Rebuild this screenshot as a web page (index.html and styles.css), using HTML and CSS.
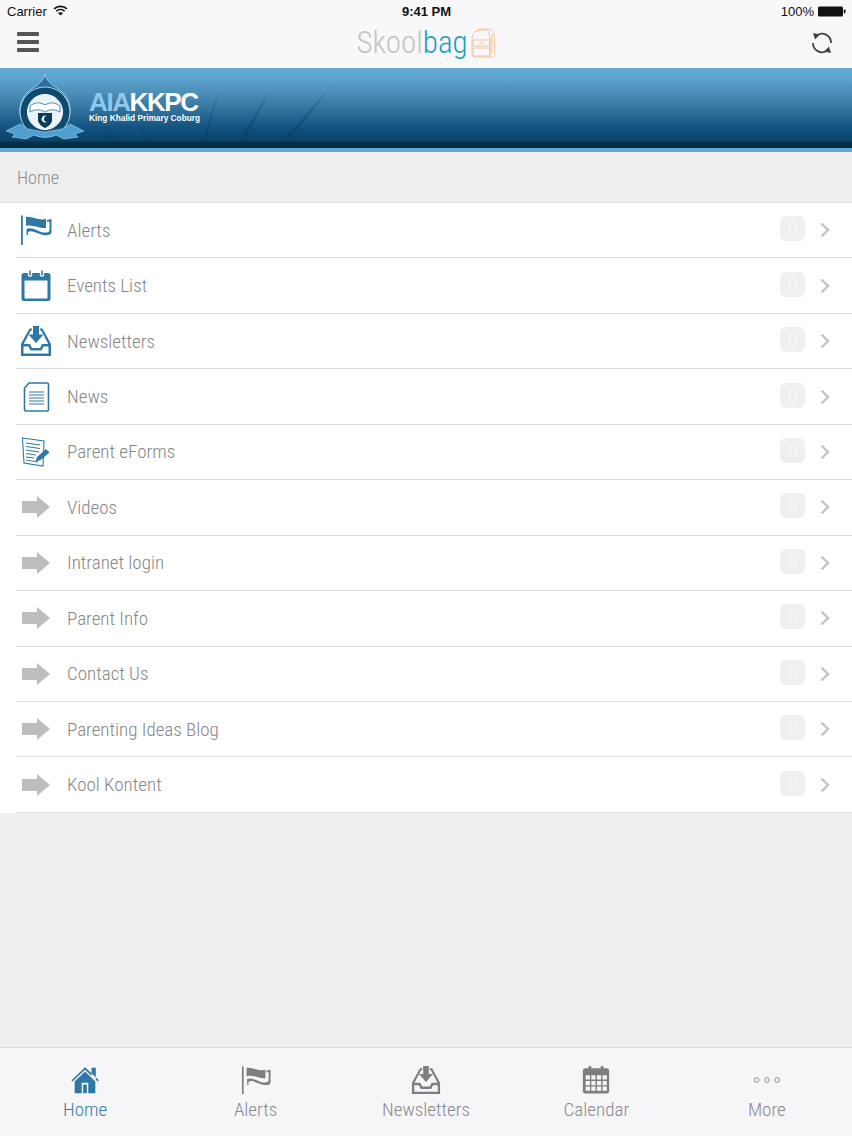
FILE: index.html
```html
<!DOCTYPE html>
<html lang="en">
<head>
<meta charset="utf-8">
<title>Skoolbag</title>
<link rel="stylesheet" href="styles.css">
</head>
<body>
<div class="app">
  <header class="top">
    <div class="status">
      <div class="status-left"><span>Carrier</span>
        <svg class="wifi" viewBox="0 0 16 12"><path d="M1 4.200C4.800.6 11.200.6 15 4.200" fill="none" stroke="#111" stroke-width="1.700"/><path d="M3.500 6.600c2.600-2.300 6.400-2.300 9 0" fill="none" stroke="#111" stroke-width="1.700"/><path d="M8 11.500 5.300 8.700c1.600-1.100 3.800-1.100 5.400 0z" fill="#111"/></svg>
      </div>
      <div class="status-time">9:41 PM</div>
      <div class="status-right"><span>100%</span>
        <svg class="battery" viewBox="0 0 28 11"><rect x="0" y="0.500" width="25" height="10" rx="1.500" fill="#111"/><rect x="25.800" y="3.500" width="1.700" height="4" rx="0.800" fill="#111"/></svg>
      </div>
    </div>
    <div class="nav">
      <div class="burger"><i></i><i></i><i></i></div>
      <div class="brand"><span class="brand-a">Skool</span><span class="brand-b">bag</span>
        <svg class="bag" viewBox="0 0 26 30" fill="none" stroke="#f2b98a" stroke-width="0.800"><path d="M7 3c0-1.500 1-2 2-2h8c3 0 6 1 7 5l1 19c0 2-1 4-3 4H5c-2 0-3-1-3-3V13c0-5 1-9 5-10z"/><path d="M3 12h17v6H3zM3 20h17v8H3zM9 15h5M17 2c2 2 3 5 3 10v16M22 6v20M7 3c3-1 7-1 10-1"/></svg>
      </div>
      <svg class="refresh" viewBox="0 0 24 24" fill="none" stroke="#444" stroke-width="1.800"><path d="M7 4.300A9 9 0 0 1 21 12"/><path d="M17 19.700A9 9 0 0 1 3 12"/><path d="M3 2l7 1.500-5 5zM21 22l-7-1.500 5-5z" fill="#444" stroke="none"/></svg>
    </div>
  </header>

  <section class="banner">
    <svg class="streaks" viewBox="0 0 852 84">
      <defs><linearGradient id="fade" x1="0" y1="1" x2="0" y2="0"><stop offset="0" stop-color="#0a3c5f" stop-opacity=".55"/><stop offset="1" stop-color="#0a3c5f" stop-opacity="0"/></linearGradient></defs>
      <path d="M203 73 217 25h1.500L206 73zM240 73 267 25h2L244 73zM283 73 333 15h2L288 73zM104 60l11 13h-3l-10-13zM143 60l7 13h-3l-6-13z" fill="url(#fade)"/>
    </svg>
    <svg class="crest" viewBox="0 0 80 72">
      <path d="M40 1c1 6 6 10 12 14 9 6 14 14 13 25-1 12-12 22-25 22S16 52 15 40c-1-11 4-19 13-25C34 11 39 7 40 1z" fill="#2a6f9f" stroke="#9ccbe8" stroke-width="1"/>
      <circle cx="40" cy="39" r="25" fill="#0f4a70" stroke="#a9d3ec" stroke-width="1"/>
      <circle cx="40" cy="39" r="17.500" fill="#e9f3f8" stroke="#fff" stroke-width="1"/>
      <path d="M25 33c5-4 10-4 15-1 5-3 10-3 15 1v6c-5-3-10-3-15 0-5-3-10-3-15 0z" fill="#fff" stroke="#2a6f9f" stroke-width="0.800"/>
      <path d="M33 40h14v7c0 3-3 6-7 8-4-2-7-5-7-8z" fill="#0b3a5a"/>
      <path d="M42 43a3.500 3.500 0 1 0 0 6 3 3 0 1 1 0-6z" fill="#fff"/>
      <path d="M1 58l14-7 8 5 17 3 17-3 8-5 14 7-9 3 3 3-14 2-8-4c-7 3-15 3-22 0l-8 4-14-2 3-3z" fill="#4f9fd0" stroke="#a9d3ec" stroke-width="0.600"/>
    </svg>
    <div class="school">
      <div class="school-name"><span class="aia">AIA</span><span class="kkpc">KKPC</span></div>
      <div class="school-sub">King Khalid Primary Coburg</div>
    </div>
  </section>

  <div class="crumb">Home</div>

  <ul class="list">
    <li class="row"><span class="row-icon"><svg class="ico" viewBox="0 0 32 32"><use href="#i-flag"/></svg></span><span class="row-label">Alerts</span><span class="badge">0</span><svg class="chev" viewBox="0 0 10 16"><path d="M1.500 1.500 8 8l-6.500 6.500"/></svg></li>
    <li class="row"><span class="row-icon"><svg class="ico" viewBox="0 0 32 32"><use href="#i-cal"/></svg></span><span class="row-label">Events List</span><span class="badge">0</span><svg class="chev" viewBox="0 0 10 16"><path d="M1.500 1.500 8 8l-6.500 6.500"/></svg></li>
    <li class="row"><span class="row-icon"><svg class="ico" viewBox="0 0 32 32"><use href="#i-inbox"/></svg></span><span class="row-label">Newsletters</span><span class="badge">0</span><svg class="chev" viewBox="0 0 10 16"><path d="M1.500 1.500 8 8l-6.500 6.500"/></svg></li>
    <li class="row"><span class="row-icon"><svg class="ico" viewBox="0 0 32 32"><path d="M9 2h18a1.500 1.500 0 0 1 1.500 1.500v25A1.500 1.500 0 0 1 27 30H6a1.500 1.500 0 0 1-1.500-1.500V7z" fill="#fff" stroke="#2f78a6" stroke-width="1.600"/><path d="M9 11h15M9 14h15M9 17h15M9 20h15M9 23h15" stroke="#2f78a6" stroke-width="1"/></svg></span><span class="row-label">News</span><span class="badge">0</span><svg class="chev" viewBox="0 0 10 16"><path d="M1.500 1.500 8 8l-6.500 6.500"/></svg></li>
    <li class="row"><span class="row-icon"><svg class="ico" viewBox="0 0 32 32"><path d="M2.500 2 24 5l-1 25L4 27z" fill="#fff" stroke="#2f78a6" stroke-width="1.100"/><path d="M6 7l14 2M6 10.500l14 2M6 14l13 2M6 17.500l10 1.500M6 21l8 1M6 24l12 2" stroke="#2f78a6" stroke-width="1"/><path d="M17 21l9-8 3.500 3.500-9 7.500-5 2z" fill="#2f78a6"/></svg></span><span class="row-label">Parent eForms</span><span class="badge">0</span><svg class="chev" viewBox="0 0 10 16"><path d="M1.500 1.500 8 8l-6.500 6.500"/></svg></li>
    <li class="row"><span class="row-icon"><svg class="ico" viewBox="0 0 32 32"><use href="#i-arrow"/></svg></span><span class="row-label">Videos</span><span class="badge">0</span><svg class="chev" viewBox="0 0 10 16"><path d="M1.500 1.500 8 8l-6.500 6.500"/></svg></li>
    <li class="row"><span class="row-icon"><svg class="ico" viewBox="0 0 32 32"><use href="#i-arrow"/></svg></span><span class="row-label">Intranet login</span><span class="badge">0</span><svg class="chev" viewBox="0 0 10 16"><path d="M1.500 1.500 8 8l-6.500 6.500"/></svg></li>
    <li class="row"><span class="row-icon"><svg class="ico" viewBox="0 0 32 32"><use href="#i-arrow"/></svg></span><span class="row-label">Parent Info</span><span class="badge">0</span><svg class="chev" viewBox="0 0 10 16"><path d="M1.500 1.500 8 8l-6.500 6.500"/></svg></li>
    <li class="row"><span class="row-icon"><svg class="ico" viewBox="0 0 32 32"><use href="#i-arrow"/></svg></span><span class="row-label">Contact Us</span><span class="badge">0</span><svg class="chev" viewBox="0 0 10 16"><path d="M1.500 1.500 8 8l-6.500 6.500"/></svg></li>
    <li class="row"><span class="row-icon"><svg class="ico" viewBox="0 0 32 32"><use href="#i-arrow"/></svg></span><span class="row-label">Parenting Ideas Blog</span><span class="badge">0</span><svg class="chev" viewBox="0 0 10 16"><path d="M1.500 1.500 8 8l-6.500 6.500"/></svg></li>
    <li class="row"><span class="row-icon"><svg class="ico" viewBox="0 0 32 32"><use href="#i-arrow"/></svg></span><span class="row-label">Kool Kontent</span><span class="badge">0</span><svg class="chev" viewBox="0 0 10 16"><path d="M1.500 1.500 8 8l-6.500 6.500"/></svg></li>
  </ul>

  <div class="spacer"></div>

  <nav class="tabs">
    <div class="tab active"><svg class="tab-ico" viewBox="0 0 32 32"><path d="M16 2.500 1.500 16.500l1.200 1.200L16 5l7 6.700V3h4.500v12.500l2 2 1.200-1.200L27.500 13z" fill="#2f78a6"/><path d="M16 7 5 17.500V30h7.500V19h7v11H27V17.500z" fill="#2f78a6"/><rect x="14" y="21" width="4" height="9" fill="#2f78a6"/></svg><span>Home</span></div>
    <div class="tab"><svg class="tab-ico grey" viewBox="0 0 32 32"><use href="#i-flag"/></svg><span>Alerts</span></div>
    <div class="tab"><svg class="tab-ico grey" viewBox="0 0 32 32"><use href="#i-inbox"/></svg><span>Newsletters</span></div>
    <div class="tab"><svg class="tab-ico" viewBox="0 0 32 32"><rect x="2" y="3.500" width="28" height="27" rx="2.500" fill="#7d7d82"/><rect x="8" y="1" width="3" height="5" rx="1.200" fill="#7d7d82"/><rect x="21" y="1" width="3" height="5" rx="1.200" fill="#7d7d82"/><path d="M5 11h4.500v4.500H5zM11 11h4.500v4.500H11zM17 11h4.500v4.500H17zM23 11h4.500v4.500H23zM5 17h4.500v4.500H5zM11 17h4.500v4.500H11zM17 17h4.500v4.500H17zM23 17h4.500v4.500H23zM5 23h4.500v4.500H5zM11 23h4.500v4.500H11zM17 23h4.500v4.500H17zM23 23h4.500v4.500H23z" fill="#f6f5f8"/></svg><span>Calendar</span></div>
    <div class="tab"><svg class="tab-ico" viewBox="0 0 32 32" fill="none" stroke="#8a8a8e" stroke-width="1"><circle cx="5" cy="16" r="2.500"/><circle cx="16" cy="16" r="2.500"/><circle cx="27" cy="16" r="2.500"/></svg><span>More</span></div>
  </nav>
</div>

<svg class="defs" aria-hidden="true">
  <defs>
    <g id="i-flag" fill="currentColor">
      <rect x="1" y="1.500" width="1.800" height="29.500"/>
      <path d="M6 3C12 2 18 7 26 5V14C20 15 12 10 6 12z"/>
      <path d="M27 6 31.500 5V18C31.500 22 25 22 20 20 15 18 10 16 8 18V21H6.500V15C11 13 16 16 21 18 25 19 29.500 19 29.500 16V7.500L27 8z"/>
    </g>
    <g id="i-cal">
      <path fill="#2f78a6" fill-rule="evenodd" d="M4 3h4.200a2.500 2.500 0 0 0 1.800 4 2.500 2.500 0 0 0 1.800-4h8.400a2.500 2.500 0 0 0 1.800 4 2.500 2.500 0 0 0 1.800-4H28a2.500 2.500 0 0 1 2.500 2.500v23A2.500 2.500 0 0 1 28 31H4a2.500 2.500 0 0 1-2.500-2.500v-23A2.500 2.500 0 0 1 4 3zm.5 7.500v17c0 .6.400 1 1 1h21c.6 0 1-.4 1-1v-17z"/>
      <path d="M10 .5v5M22 .5v5" stroke="#2f78a6" stroke-width="1.600" fill="none"/>
    </g>
    <g id="i-inbox">
      <path fill="currentColor" d="M13 1h6v8.500h4.500L16 18 8.500 9.500H13z"/>
      <path fill="currentColor" fill-rule="evenodd" d="M9.500 3.500H12v2H10.800L3.700 19H10l2 4h8l2-4h6.300L21.200 5.500H20v-2h2.500L31 19v12H1V19zM3.500 21.500v7h25v-7h-5l-2 4h-11l-2-4z"/>
    </g>
    <path id="i-arrow" fill="#bdbdbb" d="M2 10H17V5L30 16 17 27V22H2z"/>
  </defs>
</svg>
</body>
</html>
```

FILE: styles.css
```css
* { box-sizing: border-box; }
html, body { margin: 0; padding: 0; }
body { width: 852px; height: 1136px; overflow: hidden; font-family: "Roboto", "Liberation Sans", sans-serif; font-stretch: 85%; background: #efefef; }
.defs { width: 0; height: 0; display: block; overflow: hidden; }
.app { width: 852px; height: 1136px; display: flex; flex-direction: column; overflow: hidden; }

.top { height: 68px; background: #f8f7fa; flex: none; }
.status { height: 23px; display: grid; grid-template-columns: 1fr auto 1fr; align-items: center; padding: 0 6px 0 7px; font-family: "Liberation Sans", Arial, sans-serif; font-stretch: normal; font-size: 13px; color: #111; }
.status-left { display: flex; align-items: center; gap: 6px; }
.wifi { width: 15px; height: 11px; margin-bottom: 2px; }
.status-time { font-weight: 700; }
.status-right { display: flex; align-items: center; justify-content: flex-end; gap: 4px; }
.battery { width: 28px; height: 11px; }

.nav { height: 45px; display: grid; grid-template-columns: 1fr auto 1fr; align-items: center; padding: 0 17px; }
.burger { width: 22px; display: flex; flex-direction: column; gap: 4px; margin-bottom: 8px; }
.burger i { display: block; height: 4px; border-radius: 1px; background: #555; }
.brand { display: flex; align-items: center; font-weight: 300; font-size: 31px; line-height: 40px; margin-bottom: 6px; }
.brand-a { color: #c4c4c4; }
.brand-b { color: #1c9fc0; }
.bag { width: 26px; height: 30px; margin-left: 2px; }
.refresh { width: 24px; height: 24px; justify-self: end; margin: 0 1px 6px 0; }

.banner { height: 84px; flex: none; display: flex; align-items: flex-start; position: relative; overflow: hidden; padding: 5px 0 0 5px;
  background: linear-gradient(#62a9d3 0, #5ea7d1 8px, #4b8db7 26px, #2d6f98 44px, #125280 60px, #0a4468 72px, #0a4468 73px, #052f4b 74px, #062e47 80px, #62a8d4 80px, #62a8d4 84px); }
.streaks { position: absolute; left: 0; top: 0; width: 852px; height: 84px; }
.crest { width: 80px; height: 72px; flex: none; position: relative; }
.school { margin: 17px 0 0 4px; position: relative; font-family: "Liberation Sans", Arial, sans-serif; font-stretch: normal; font-weight: 700; color: #fff; }
.school-name { font-size: 26px; line-height: 24px; letter-spacing: -1.400px; }
.aia { color: #8fc8ec; }
.school-sub { font-size: 8.300px; line-height: 8px; white-space: nowrap; }

.crumb { height: 50px; flex: none; padding-left: 17px; display: flex; align-items: center; font-weight: 300; font-size: 18px; color: #8d8d8d; background: #efefef; }
.list { list-style: none; margin: 0; padding: 0; flex: none; background: #fff; border-top: 1px solid #dcdcdc; }
.row { height: 55.450px; margin-left: 16px; display: flex; align-items: center; border-bottom: 1px solid #dddddd; padding-right: 22px; }
.row-icon { width: 51px; flex: none; display: flex; align-items: center; }
.ico { width: 32px; height: 32px; color: #2f78a6; display: block; margin-left: 4px; }
.row-label { flex: 1; font-weight: 300; font-size: 19px; color: #868686; }
.badge { width: 25px; height: 25px; border-radius: 6px; background: #efefef; color: #fbfbfb; font-size: 19px; font-weight: 300; display: flex; align-items: center; justify-content: center; margin-bottom: 3px; }
.chev { width: 10px; height: 16px; margin-left: 15px; fill: none; stroke: #c4c4c6; stroke-width: 2.400; }

.spacer { flex: 1; }
.tabs { height: 89px; flex: none; display: grid; grid-template-columns: repeat(5, 1fr); background: #f6f5f8; border-top: 1px solid #d9d9d9; }
.tab { display: flex; flex-direction: column; align-items: center; padding-top: 17px; font-weight: 300; font-size: 19px; color: #8a8a8e; }
.tab span { line-height: 24px; margin-top: 3px; }
.tab-ico { width: 30px; height: 30px; display: block; }
.tab-ico.grey { color: #7d7d82; }
.tab.active { color: #3a7ca6; }
```
